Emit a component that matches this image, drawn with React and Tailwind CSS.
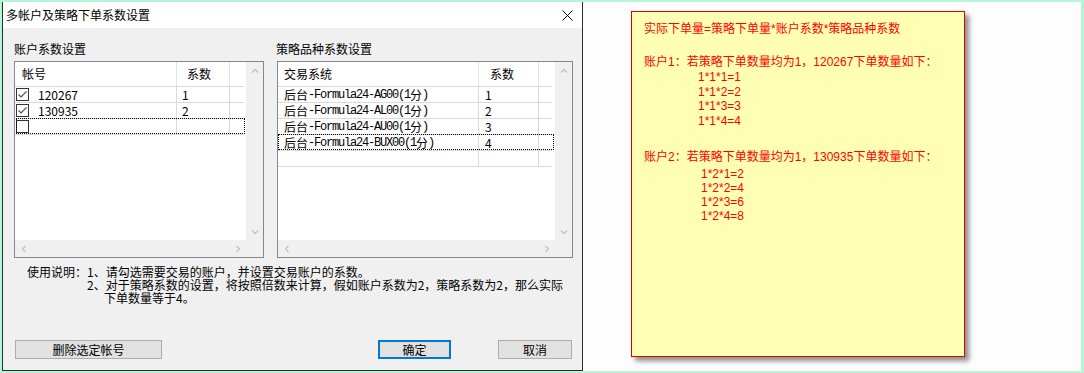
import React from "react";

function Chevron({ dir }) {
  const paths = {
    up: "M1 5.5 L4 2.5 L7 5.5",
    down: "M1 2.5 L4 5.5 L7 2.5",
    left: "M5.5 1 L2.5 4 L5.5 7",
    right: "M2.5 1 L5.5 4 L2.5 7",
  };
  return (
    <svg width="8" height="8" viewBox="0 0 8 8" className="block">
      <path d={paths[dir]} fill="none" stroke="#c4c4c4" strokeWidth="1.3" />
    </svg>
  );
}

function Checkbox({ checked }) {
  return (
    <div className="w-[13px] h-[13px] border border-[#333333] bg-white flex items-center justify-center shrink-0">
      {checked && (
        <svg width="11" height="11" viewBox="0 0 11 11" className="block">
          <path d="M1.5 5.5 L4 8 L9.5 2.5" fill="none" stroke="#555555" strokeWidth="1.2" />
        </svg>
      )}
    </div>
  );
}

function Mixed({ text }) {
  const parts = text.split(/([\u4e00-\u9fff]+)/).filter(Boolean);
  return parts.map((p, i) =>
    /[\u4e00-\u9fff]/.test(p) ? (
      <span key={i}>{p}</span>
    ) : (
      <span key={i} className="font-['Liberation_Mono',monospace] tracking-[-1.2px]">
        {p}
      </span>
    )
  );
}

function Frame({ wide, children }) {
  return (
    <div
      className={
        wide
          ? "w-[296px] h-[197px] border border-[#828790] bg-white flex flex-col"
          : "w-[250px] h-[197px] border border-[#828790] bg-white flex flex-col"
      }
    >
      <div className="flex flex-1 min-h-0">
        <div className="flex-1 min-w-0 overflow-hidden bg-white">{children}</div>
        <div className="w-[17px] bg-[#f0f0f0] flex flex-col justify-between">
          <div className="h-[17px] flex items-center justify-center">
            <Chevron dir="up" />
          </div>
          <div className="h-[17px] flex items-center justify-center">
            <Chevron dir="down" />
          </div>
        </div>
      </div>
      <div className="h-[17px] bg-[#f0f0f0] flex">
        <div className="flex-1 flex justify-between items-center">
          <div className="w-[17px] flex justify-center">
            <Chevron dir="left" />
          </div>
          <div className="w-[17px] flex justify-center">
            <Chevron dir="right" />
          </div>
        </div>
        <div className="w-[17px]" />
      </div>
    </div>
  );
}

function AccountList() {
  const rows = [
    { id: "120267", k: "1", checked: true },
    { id: "130935", k: "2", checked: true },
    { id: "", k: "", checked: false, focus: true },
  ];
  return (
    <Frame>
      <div className="w-[229px]">
        <div className="h-[25px] flex border-b border-[#dadada] leading-none">
          <div className="w-[162px] border-r border-[#e3e3e3] pl-[7px] flex items-center">帐号</div>
          <div className="w-[53px] border-r border-[#e3e3e3] pl-[10px] flex items-center">系数</div>
          <div className="w-[14px]" />
        </div>
        {rows.map((r, i) => (
          <div key={i} className="relative h-[16px] flex border-b border-[#dadada] leading-none">
            <div className="w-[162px] border-r border-[#dadada] flex items-center pl-[1px]">
              <Checkbox checked={r.checked} />
              <span className="ml-[9px]">{r.id}</span>
            </div>
            <div className="w-[53px] border-r border-[#dadada] flex items-center pl-[5px]">{r.k}</div>
            <div className="w-[14px]" />
            {r.focus && (
              <div className="absolute left-[1px] right-[-1px] top-[-1px] bottom-0 border border-dotted border-black" />
            )}
          </div>
        ))}
      </div>
    </Frame>
  );
}

function StrategyList() {
  const rows = [
    { name: "后台-Formula24-AG00(1分)", k: "1" },
    { name: "后台-Formula24-AL00(1分)", k: "2" },
    { name: "后台-Formula24-AU00(1分)", k: "3" },
    { name: "后台-Formula24-BUX00(1分)", k: "4", focus: true },
    { name: "", k: "" },
  ];
  return (
    <Frame wide>
      <div className="w-[274px]">
        <div className="h-[25px] flex border-b border-[#dadada] leading-none">
          <div className="w-[201px] border-r border-[#e3e3e3] pl-[6px] flex items-center">交易系统</div>
          <div className="w-[60px] border-r border-[#e3e3e3] pl-[11px] flex items-center">系数</div>
          <div className="w-[13px]" />
        </div>
        {rows.map((r, i) => (
          <div key={i} className="relative h-[16px] flex border-b border-[#dadada] leading-none">
            <div className="w-[201px] border-r border-[#dadada] flex items-center pl-[6px] whitespace-nowrap">
              <Mixed text={r.name} />
            </div>
            <div className="w-[60px] border-r border-[#dadada] flex items-center pl-[6px]">{r.k}</div>
            <div className="w-[13px]" />
            {r.focus && (
              <div className="absolute left-0 right-[-2px] top-[-1px] bottom-0 border border-dotted border-black" />
            )}
          </div>
        ))}
      </div>
    </Frame>
  );
}

function Dialog() {
  return (
    <div className="w-[581px] h-full border-l border-r border-b border-[#2b2b2b] flex flex-col bg-[#f0f0f0]">
      <div className="h-[26px] bg-white flex items-center justify-between pl-[3px] pr-[9px] leading-none">
        <span>多帐户及策略下单系数设置</span>
        <svg width="11" height="11" viewBox="0 0 11 11" className="block">
          <path d="M0.5 0.5 L10.5 10.5 M10.5 0.5 L0.5 10.5" fill="none" stroke="#000000" strokeWidth="1" />
        </svg>
      </div>
      <div className="flex-1 flex flex-col pt-[13px] pb-[11px]">
        <div className="flex pl-[11px] gap-[13px]">
          <div className="flex flex-col">
            <div className="leading-[16px] h-[16px]">账户系数设置</div>
            <div className="mt-[4px]">
              <AccountList />
            </div>
          </div>
          <div className="flex flex-col">
            <div className="leading-[16px] h-[16px] -ml-[1px]">策略品种系数设置</div>
            <div className="mt-[4px]">
              <StrategyList />
            </div>
          </div>
        </div>
        <div className="mt-[7px] leading-[13px] whitespace-nowrap">
          <div className="pl-[24px]">使用说明：1、请勾选需要交易的账户，并设置交易账户的系数。</div>
          <div className="pl-[84px]">2、对于策略系数的设置，将按照倍数来计算，假如账户系数为2，策略系数为2，那么实际</div>
          <div className="pl-[101px]">下单数量等于4。</div>
        </div>
        <div className="mt-auto flex pl-[12px] pr-[10px] leading-none">
          <div className="w-[147px] h-[19px] border border-[#adadad] bg-[#e1e1e1] flex items-center justify-center">
            删除选定帐号
          </div>
          <div className="ml-auto w-[73px] h-[19px] border-2 border-[#0078d7] bg-[#e1e1e1] flex items-center justify-center">
            确定
          </div>
          <div className="ml-[47px] w-[74px] h-[19px] border border-[#adadad] bg-[#e1e1e1] flex items-center justify-center">
            取消
          </div>
        </div>
      </div>
    </div>
  );
}

function Note() {
  return (
    <div className="w-[334px] h-[346px] bg-[#ffffb4] border border-[#e00000] shadow-[4px_4px_5px_rgba(0,0,0,0.45)] pl-[12px] pt-[10px] text-[#ff0000] font-['Liberation_Sans','Noto_Sans_CJK_SC',sans-serif] whitespace-nowrap">
      <div className="leading-[15px]">实际下单量=策略下单量*账户系数*策略品种系数</div>
      <div className="mt-[18px] leading-[15px]">账户1：若策略下单数量均为1，120267下单数量如下：</div>
      <div className="ml-[54px] leading-[14.5px]">
        <div>1*1*1=1</div>
        <div>1*1*2=2</div>
        <div>1*1*3=3</div>
        <div>1*1*4=4</div>
      </div>
      <div className="mt-[22px] leading-[15px]">账户2：若策略下单数量均为1，130935下单数量如下：</div>
      <div className="mt-[2px] ml-[57px] leading-[14px]">
        <div>1*2*1=2</div>
        <div>1*2*2=4</div>
        <div>1*2*3=6</div>
        <div>1*2*4=8</div>
      </div>
    </div>
  );
}

export default function App() {
  return (
    <div className="w-[1084px] h-[373px] bg-[#b4f5d8] pt-[2px] pl-[2px] pr-[3px] pb-[2px] flex font-['Noto_Sans_CJK_SC','Noto_Sans',sans-serif] text-[12px] text-black">
      <Dialog />
      <div className="flex-1 h-full bg-[#fdfdfd] pl-[48px] pt-[9px]">
        <Note />
      </div>
    </div>
  );
}
